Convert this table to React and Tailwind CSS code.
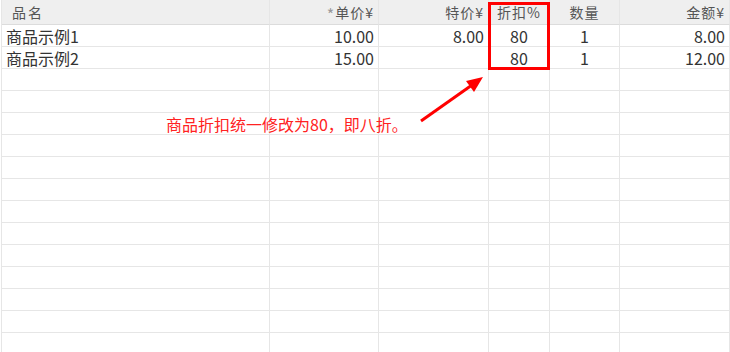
const cols = 'grid grid-cols-[268px_109px_110px_61px_70px_110px]'
const cell = 'border-r border-b border-[#e6e6e6] h-[22px] px-[4px] flex items-center'

const rows = [
  { name: '商品示例1', price: '10.00', special: '8.00', discount: '80', qty: '1', amount: '8.00' },
  { name: '商品示例2', price: '15.00', special: '', discount: '80', qty: '1', amount: '12.00' },
]

const App = () => {
  const blanks = Array.from({ length: 13 })

  return (
    <div className="relative w-[730px] h-[352px] overflow-hidden bg-white font-['Noto_Sans_CJK_SC','Noto_Sans',sans-serif] text-[16px] text-[#333]">
      <div className="ml-px border-l border-[#e6e6e6] w-[729px]">
        {/* Header */}
        <div className={`${cols} bg-[#efefef] text-[14px] text-[#555]`}>
          <div className={`${cell} h-[25px] border-b-[#dcdcdc] pl-[10px] tracking-[2px]`}>品名</div>
          <div className={`${cell} h-[25px] border-b-[#dcdcdc] justify-end tracking-[1px]`}>
            <span className="text-[#999] text-[16px] leading-none pt-[4px]">*</span>单价¥
          </div>
          <div className={`${cell} h-[25px] border-b-[#dcdcdc] justify-end tracking-[1px]`}>特价¥</div>
          <div className={`${cell} h-[25px] border-b-[#dcdcdc] justify-center tracking-[1px]`}>折扣%</div>
          <div className={`${cell} h-[25px] border-b-[#dcdcdc] justify-center tracking-[1px]`}>数量</div>
          <div className={`${cell} h-[25px] border-b-[#dcdcdc] justify-end tracking-[1px]`}>金额¥</div>
        </div>

        {rows.map((r, i) => (
          <div key={i} className={cols}>
            <div className={`${cell} pl-[4px]`}>{r.name}</div>
            <div className={`${cell} justify-end`}>{r.price}</div>
            <div className={`${cell} justify-end`}>{r.special}</div>
            <div className={`${cell} justify-center`}>{r.discount}</div>
            <div className={`${cell} justify-center`}>{r.qty}</div>
            <div className={`${cell} justify-end`}>{r.amount}</div>
          </div>
        ))}

        {blanks.map((_, i) => (
          <div key={i} className={cols}>
            <div className={cell} />
            <div className={cell} />
            <div className={cell} />
            <div className={cell} />
            <div className={cell} />
            <div className={cell} />
          </div>
        ))}
      </div>

      {/* highlight box around discount column */}
      <div className="absolute left-[488px] top-[2px] w-[62px] h-[68px] border-[3px] border-[#ff0000]" />

      {/* arrow */}
      <svg className="absolute left-0 top-0" width="730" height="352">
        <line x1="421" y1="121" x2="472" y2="85" stroke="#ff0000" strokeWidth="3" />
        <polygon points="483,77 466,81 474,92" fill="#ff0000" />
      </svg>

      {/* note */}
      <div className="absolute left-[166px] top-[114px] text-[16px] text-[#f22] leading-[20px]">
        商品折扣统一修改为80，即八折。
      </div>
    </div>
  )
}

export default App
